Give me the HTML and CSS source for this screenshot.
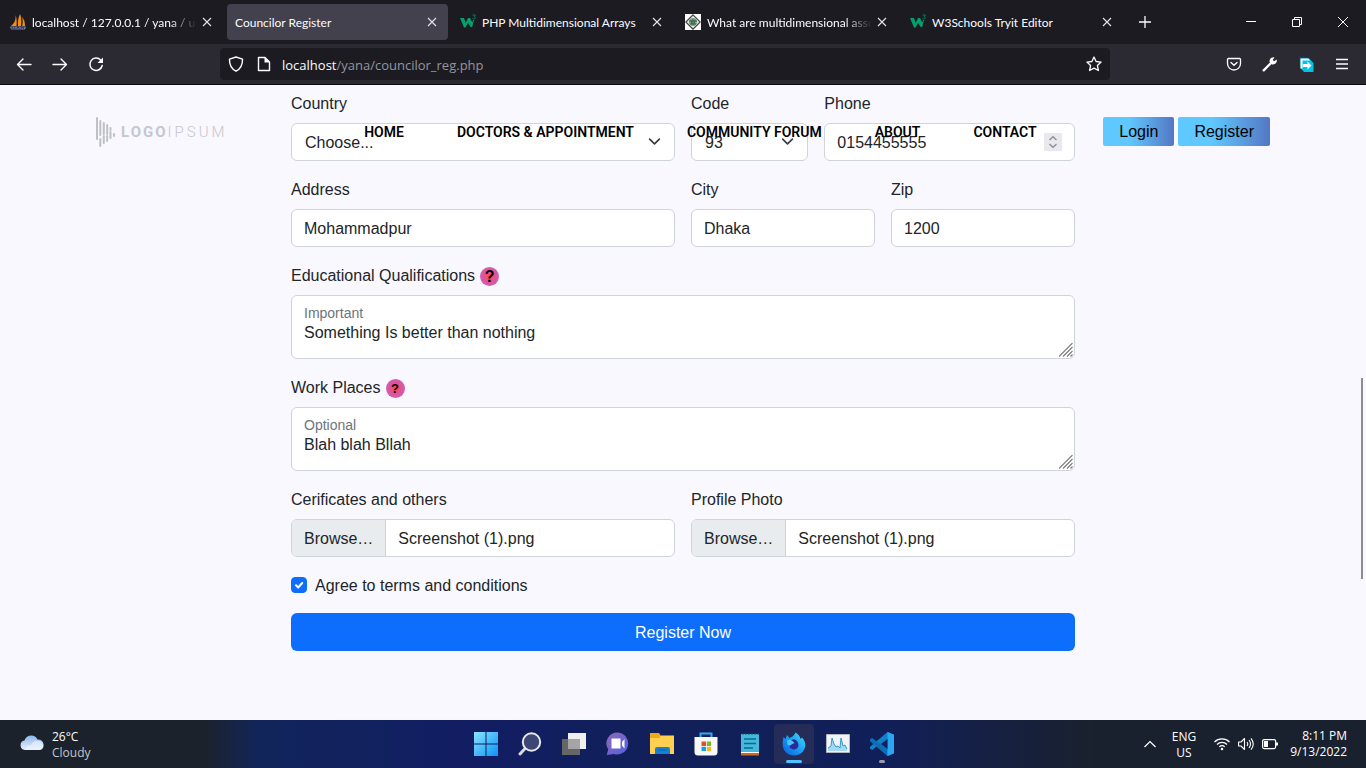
FILE: index.html
```html
<!DOCTYPE html>
<html lang="en">
<head>
<meta charset="utf-8">
<meta name="viewport" content="width=device-width, initial-scale=1">
<title>Councilor Register</title>
<link rel="stylesheet" href="styles.css">
</head>
<body>
<svg class="defs" width="0" height="0" aria-hidden="true">
  <symbol id="x" viewBox="0 0 16 16"><path d="M4 4l8 8M12 4l-8 8" fill="none" stroke="#e6e6ea" stroke-width="1.1"/></symbol>
  <symbol id="w3" viewBox="0 0 16 16"><path d="M0 4h4l1.700 5L8 4h2l2.300 4.500L13 6h1l-1.800 7h-1.500L8 9l-2.500 4.500H4z" fill="#04a06c"/><path d="M12.500 1h3l-1.400 1.600c1.500 0 1.600 2 .2 2.300-.7.200-1.400 0-1.800-.4" fill="none" stroke="#04805a"/></symbol>
  <symbol id="chev" viewBox="0 0 16 16"><path d="M2 5l6 6 6-6" fill="none" stroke="#343a40" stroke-width="2" stroke-linecap="round" stroke-linejoin="round"/></symbol>
  <symbol id="grip" viewBox="0 0 14 14"><path d="M0 13.500L13.500 0M4 13.500L13.500 4M8 13.500L13.500 8M11.500 13.500l2-2" fill="none" stroke="#777" stroke-width="1.100"/></symbol>
</svg>

<header class="browser">
  <div class="tabstrip">
    <div class="tab">
      <svg class="ico" viewBox="0 0 16 16"><path d="M5.500 1C6 5 5 9 1 12h5.500c.5-4 .3-8-1-11zM10 0c-2 4-2.300 8-2 12h3c.6-4 .4-9-1-12zM12 3c1 3 .8 6 .2 9H15c0-4-1-7-3-9z" fill="#f29111"/><path d="M0 12.500h16l-1 3H1z" fill="#777a9c"/><path d="M2 15v-1.500l1.500 1 1.500-1V15m2 0v-1.500h2V15m2 0v-1.500h2.500V15" stroke="#26263c" fill="none" stroke-width=".7"/></svg>
      <span class="tab-title fade">localhost / 127.0.0.1 / yana / users</span>
      <button class="close" aria-label="Close tab"><svg class="ico"><use href="#x"/></svg></button>
    </div>
    <div class="tab active">
      <span class="tab-title">Councilor Register</span>
      <button class="close" aria-label="Close tab"><svg class="ico"><use href="#x"/></svg></button>
    </div>
    <div class="tab">
      <svg class="ico"><use href="#w3"/></svg>
      <span class="tab-title">PHP Multidimensional Arrays</span>
      <button class="close" aria-label="Close tab"><svg class="ico"><use href="#x"/></svg></button>
    </div>
    <div class="tab">
      <svg class="ico" viewBox="0 0 16 16"><path fill="#fff" d="M0 0h16v16H0z"/><path d="M8 .8L15.200 8 8 15.200.8 8z" fill="#e4e9e5" stroke="#444" stroke-width="1.200"/><circle cx="8" cy="8" r="4" fill="#7aa588"/><path d="M4 7h8M5 10h6M8 5v6M6 6l1 4M10 6l-1 4" stroke="#325c43" stroke-width=".8"/></svg>
      <span class="tab-title fade">What are multidimensional associative arrays</span>
      <button class="close" aria-label="Close tab"><svg class="ico"><use href="#x"/></svg></button>
    </div>
    <div class="tab">
      <svg class="ico"><use href="#w3"/></svg>
      <span class="tab-title">W3Schools Tryit Editor</span>
      <button class="close" aria-label="Close tab"><svg class="ico"><use href="#x"/></svg></button>
    </div>
    <button class="tool" aria-label="New tab"><svg class="ico" viewBox="0 0 16 16"><path d="M8 2v12M2 8h12" stroke="#fbfbfe" stroke-width="1.300"/></svg></button>
    <div class="window-controls">
      <button aria-label="Minimize"><svg class="ico" viewBox="0 0 16 16"><path d="M3 7.500h10" stroke="#fff"/></svg></button>
      <button aria-label="Restore"><svg class="ico" viewBox="0 0 16 16"><path d="M3.500 5.500h7v7h-7zM5.500 5.500v-2h7v7h-2" fill="none" stroke="#fff"/></svg></button>
      <button aria-label="Close"><svg class="ico" viewBox="0 0 16 16"><path d="M3 3l10 10M13 3L3 13" stroke="#fff"/></svg></button>
    </div>
  </div>
  <div class="toolbar">
    <button class="tool" aria-label="Back"><svg class="ico" viewBox="0 0 16 16"><path d="M15 8.500H1.500M7 3L1.500 8.500 7 14" fill="none" stroke="#fbfbfe" stroke-width="1.400" stroke-linecap="round" stroke-linejoin="round"/></svg></button>
    <button class="tool" aria-label="Forward"><svg class="ico" viewBox="0 0 16 16"><path d="M1 8.500h13.500M9 3l5.500 5.500L9 14" fill="none" stroke="#fbfbfe" stroke-width="1.400" stroke-linecap="round" stroke-linejoin="round"/></svg></button>
    <button class="tool" aria-label="Reload"><svg class="ico" viewBox="0 0 16 16"><path d="M12.800 4.200A6.200 6.200 0 1 0 14.200 9.500" fill="none" stroke="#fbfbfe" stroke-width="1.500" stroke-linecap="round"/><path d="M15 1.500v5.500H9.500z" fill="#fbfbfe"/></svg></button>
    <div class="urlbar">
      <svg class="ico" viewBox="0 0 16 16"><path d="M8 1L14.500 3.200C14.700 8.500 13 12.500 8 15.200 3 12.500 1.300 8.500 1.500 3.200z" fill="none" stroke="#fbfbfe" stroke-width="1.400" stroke-linejoin="round"/></svg>
      <svg class="ico" viewBox="0 0 16 16"><path d="M3.500 1.500H9L13.500 6v8.500h-11v-13z" fill="none" stroke="#fbfbfe" stroke-width="1.400" stroke-linejoin="round"/><path d="M8.500 1v5.500H14z" fill="#fbfbfe"/></svg>
      <a class="url" href="#"><span class="host">localhost</span>/yana/councilor_reg.php</a>
      <svg class="ico" viewBox="0 0 16 16"><path d="M8 1l2.100 4.500 5 .6-3.700 3.400 1 5L8 12.100 3.600 14.500l1-5L.9 6.100l5-.6z" fill="none" stroke="#fbfbfe" stroke-width="1.300" stroke-linejoin="round"/></svg>
    </div>
    <button class="tool" aria-label="Save to Pocket"><svg class="ico" viewBox="0 0 16 16"><path d="M2.500 2.500h11q1 0 1 1v4a6.500 6.500 0 0 1-13 0v-4q0-1 1-1z" fill="none" stroke="#fbfbfe" stroke-width="1.300"/><path d="M5 6.500l3 2.800 3-2.800" fill="none" stroke="#fbfbfe" stroke-width="1.400" stroke-linecap="round"/></svg></button>
    <button class="tool" aria-label="Developer tools"><svg class="ico" viewBox="0 0 16 16"><path d="M1.700 14.300L9 7" stroke="#fbfbfe" stroke-width="2.400" stroke-linecap="round"/><path d="M12.500 1.300L10.800 4l1.200 1.200 2.800-1.600c.6 3-1.600 5.400-4.700 4.800L7.600 6C7.200 3 9.500.7 12.500 1.300z" fill="#fbfbfe"/></svg></button>
    <button class="tool" aria-label="Extension"><svg class="ico" viewBox="0 0 16 16"><path d="M1 .5h8v7H1z" fill="#0b3d6e"/><path d="M2.500 2.500H11L15.500 7v9H6l-3.500-4z" fill="#00c4e6"/><path d="M2.500 2.500h8L12 4.500H4.500v8h-2z" fill="#fff"/><path d="M5 8h4.500V5.500l4 4-4 4V11H5z" fill="#fff"/></svg></button>
    <button class="tool" aria-label="Menu"><svg class="ico" viewBox="0 0 16 16"><path d="M2 3.500h12M2 8h12M2 12.500h12" stroke="#fbfbfe" stroke-width="1.300"/></svg></button>
  </div>
</header>

<div class="page">
  <header class="site-header">
    <a class="brand" href="#" aria-label="Logoipsum">
      <svg width="20" height="30" viewBox="0 0 20 30"><path d="M1 1v21M4.300 4v14M4.300 22v7M7.800 6v11M7.800 19v7M11.200 8v9M11.200 19v5M14.500 11v2M14.500 15v6M18 17v2" fill="none" stroke="#bfc0c6" stroke-width="2" stroke-linecap="round"/></svg>
      <span class="brand-text"><b>LOGO</b>IPSUM</span>
    </a>
    <nav class="site-nav">
      <a href="#">HOME</a>
      <a href="#">DOCTORS &amp; APPOINTMENT</a>
      <a href="#">COMMUNITY FORUM</a>
      <a href="#">ABOUT</a>
      <a href="#">CONTACT</a>
    </nav>
    <div class="auth">
      <button class="auth-btn">Login</button>
      <button class="auth-btn">Register</button>
    </div>
  </header>

  <form class="form">
    <div class="field half">
      <label for="country">Country</label>
      <div class="wrap"><select id="country" class="control"><option>Choose...</option></select><svg class="arrow"><use href="#chev"/></svg></div>
    </div>
    <div class="field sixth">
      <label for="code">Code</label>
      <div class="wrap"><select id="code" class="control"><option>93</option></select><svg class="arrow"><use href="#chev"/></svg></div>
    </div>
    <div class="field third">
      <label for="phone">Phone</label>
      <div class="wrap"><input id="phone" class="control" type="number" value="0154455555"><svg class="spinner" viewBox="0 0 18 18"><path d="M0 0h18v18H0z" fill="#e9e9ed"/><path d="M5.500 7L9 3.800 12.500 7M5.500 11L9 14.200 12.500 11" fill="none" stroke="#8f8f9d" stroke-width="1.500"/></svg></div>
    </div>
    <div class="field half">
      <label for="address">Address</label>
      <input id="address" class="control" type="text" value="Mohammadpur">
    </div>
    <div class="field quarter">
      <label for="city">City</label>
      <input id="city" class="control" type="text" value="Dhaka">
    </div>
    <div class="field quarter">
      <label for="zip">Zip</label>
      <input id="zip" class="control" type="text" value="1200">
    </div>
    <div class="field full">
      <div class="label-row"><label for="education">Educational Qualifications</label><button type="button" class="help">?</button></div>
      <div class="wrap"><textarea id="education" class="control area">Something Is better than nothing</textarea><label class="floating" for="education">Important</label><svg class="grip"><use href="#grip"/></svg></div>
    </div>
    <div class="field full">
      <div class="label-row"><label for="work">Work Places</label><button type="button" class="help small">?</button></div>
      <div class="wrap"><textarea id="work" class="control area">Blah blah Bllah</textarea><label class="floating" for="work">Optional</label><svg class="grip"><use href="#grip"/></svg></div>
    </div>
    <div class="field half">
      <label for="certificates">Cerificates and others</label>
      <div class="control file"><span class="browse">Browse…</span><span class="filename">Screenshot (1).png</span><input id="certificates" type="file"></div>
    </div>
    <div class="field half">
      <label for="photo">Profile Photo</label>
      <div class="control file"><span class="browse">Browse…</span><span class="filename">Screenshot (1).png</span><input id="photo" type="file"></div>
    </div>
    <div class="check full">
      <span class="box"><input id="agree" type="checkbox" checked><svg class="tick" viewBox="0 0 16 16"><path d="M5 8.300l2.200 2.200L11.200 6" fill="none" stroke="#fff" stroke-width="2" stroke-linecap="round" stroke-linejoin="round"/></svg></span>
      <label for="agree">Agree to terms and conditions</label>
    </div>
    <button type="button" class="submit full">Register Now</button>
  </form>
  <div class="scrollbar"></div>
</div>

<footer class="taskbar">
  <div class="weather">
    <svg width="24" height="24" viewBox="0 0 24 24"><defs><linearGradient id="cl" x2="0" y2="1"><stop stop-color="#8fb7ee"/><stop offset="1" stop-color="#e8f0fb"/></linearGradient></defs><path d="M5 18a4.800 4.800 0 0 1-.5-9.500A7 7 0 0 1 17.500 7.500 5.300 5.300 0 0 1 19 18z" fill="url(#cl)"/><path d="M6 18c-1-3 2-6 5-4 1-6 9-7 11-2 3 2 1 6-2.500 6z" fill="#eef4fc" opacity=".65"/></svg>
    <div class="lines"><div>26°C</div><div class="dim">Cloudy</div></div>
  </div>
  <div class="apps">
    <button class="app" aria-label="Start"><svg viewBox="0 0 24 24"><defs><linearGradient id="wn" x2="1" y2="1"><stop stop-color="#8be3ff"/><stop offset="1" stop-color="#0894f5"/></linearGradient></defs><path d="M0 0h11.500v11.500H0zM12.500 0H24v11.500H12.500zM0 12.500h11.500V24H0zM12.500 12.500H24V24H12.500z" fill="url(#wn)"/></svg></button>
    <button class="app" aria-label="Search"><svg viewBox="0 0 24 24"><path d="M8 15.500L2 22" stroke="#d9d9de" stroke-width="3" stroke-linecap="round"/><circle cx="13.500" cy="10" r="8.700" fill="#3c4775" stroke="#e8e8ec" stroke-width="2"/></svg></button>
    <button class="app" aria-label="Task view"><svg viewBox="0 0 24 24"><path d="M6 1h18v16H6z" fill="#f0f0f0"/><path d="M0 7h18v16H0z" fill="#666"/><path d="M6 7h12v10H6z" fill="#a5a5a5"/></svg></button>
    <button class="app" aria-label="Chat"><svg viewBox="0 0 24 24"><defs><linearGradient id="ch" x2="1" y2="1"><stop stop-color="#8f68b8"/><stop offset="1" stop-color="#5360e0"/></linearGradient></defs><path d="M12 .5a11 11 0 1 1-4 21.500L.8 23l1.400-5.500A11 11 0 0 1 12 .5z" fill="url(#ch)"/><path d="M5.500 6.500h9v10h-9zM16 10l2.500-3v9.500L16 13.500z" fill="#fff"/></svg></button>
    <button class="app" aria-label="File Explorer"><svg viewBox="0 0 24 24"><path d="M0 1h9l2 3h13v18H0z" fill="#f0a910"/><path d="M0 6h9l2-2.500h13V22H0z" fill="#ffd04f"/><path d="M5 22v-5q0-2 2-2h11q2 0 2 2v5z" fill="#1481d2"/><path d="M8.500 18h8" stroke="#0a5ea8"/></svg></button>
    <button class="app" aria-label="Store"><svg viewBox="0 0 24 24"><path d="M6.500 6V1.500h11V6" fill="none" stroke="#2dacef" stroke-width="2"/><path d="M.5 5h23v15q0 3.500-3.500 3.500H4Q.5 23.500.5 20z" fill="#f8f8fa"/><path d="M7.500 9.500H12V14H7.500z" fill="#e45126"/><path d="M12.800 9.500H17V14h-4.200z" fill="#7db72b"/><path d="M7.500 14.800H12V19H7.500z" fill="#18a1e0"/><path d="M12.800 14.800H17V19h-4.200z" fill="#f9b718"/></svg></button>
    <button class="app" aria-label="Notepad"><svg viewBox="0 0 24 24"><path d="M3 2h18v19H3z" fill="#45b8dc"/><path d="M3 21h18v2.500H3z" fill="#c76c22"/><path d="M3 20h18v1H3z" fill="#fff"/><path d="M5 1v2M8 1v2M11 1v2M14 1v2M17 1v2M20 1v2" stroke="#0b5777"/><path d="M6 7h12M6 11.500h12M6 16h9" stroke="#076b93" stroke-width="1.500"/></svg></button>
    <button class="app current" aria-label="Firefox"><svg viewBox="0 0 24 24"><defs><linearGradient id="ff" x1="1" x2="0" y2="1"><stop stop-color="#42e4fa"/><stop offset=".5" stop-color="#1a9cf4"/><stop offset="1" stop-color="#0a5be0"/></linearGradient></defs><path d="M1.500 5L3.500 7 5 3l2.500 3 3-1.500C12 3 13 2 13.500.5 16 2 18 4 18.500 7L20 5.500C22 8 23.500 10 23.300 13.500 22.500 20 18 23.500 12 23.500S1 19 .7 13C.5 10 1 8 1.500 5z" fill="url(#ff)"/><path d="M7 12c0-4 5-6 8-3 3 4 1 9-4 8.500-2.500-.5-4-2.500-4-5.500z" fill="#272c98"/><path d="M5 8.500c2-1 4-1 6 1l1.500 1.500-3 1.500c-2 2-3 1-4 0z" fill="#44c7fa"/></svg></button>
    <button class="app" aria-label="Resource monitor"><svg viewBox="0 0 24 24"><path d="M.5 2.500h23v18H.5z" fill="#f1f4f7" stroke="#b2b7bd"/><path d="M2 19v-3l3-2 1-8 2 6 2 3 2-1 2 2 1-10 2 8 2-1 2 4v2z" fill="#a3d7f4"/><path d="M2 16l3-2 1-8 2 6 2 3 2-1 2 2 1-10 2 8 2-1 2 4" fill="none" stroke="#3698ce"/></svg></button>
    <button class="app running" aria-label="Visual Studio Code"><svg viewBox="0 0 24 24"><path d="M17.500 0L24 2.700v18.600L17.500 24 7 14.200 2.200 18 0 16.700v-2L17.500 0z" fill="#147fc9"/><path d="M2.200 6L0 7.200v2L17.500 24v-6.500z" fill="#0c6eb5"/><path d="M17.500 0L24 2.700v18.600L17.500 24z" fill="#2aa7f2"/><path d="M17.500 7v10L11 12z" fill="#11205a"/></svg></button>
  </div>
  <div class="tray">
    <svg width="14" height="10" viewBox="0 0 14 10"><path d="M1.500 8L7 2.500 12.500 8" fill="none" stroke="#fff" stroke-width="1.200"/></svg>
    <div class="lang lines"><div>ENG</div><div>US</div></div>
    <div class="status">
      <svg class="ico" viewBox="0 0 16 16"><path d="M.5 6a10.500 10.500 0 0 1 15 0M3 8.500a7 7 0 0 1 10 0M5.300 10.800a3.800 3.800 0 0 1 5.400 0" fill="none" stroke="#fff" stroke-width="1.200"/><circle cx="8" cy="13" r="1.300" fill="#fff"/></svg>
      <svg class="ico" viewBox="0 0 16 16"><path d="M.6 6H3l3.500-3.500v11L3 10H.6zM9 6q1.500 2 0 4M11 4q3 4 0 8M13 2.300q4.500 5.700 0 11.400" fill="none" stroke="#fff" stroke-width="1.100" stroke-linejoin="round"/></svg>
      <svg class="ico" viewBox="0 0 16 16"><rect x=".6" y="3.600" width="13" height="9" rx="1.500" fill="none" stroke="#fff" stroke-width="1.200"/><path d="M2 5h4v6H2zM14 6.500h2v3h-2z" fill="#fff"/></svg>
    </div>
    <div class="clock"><div>8:11 PM</div><div>9/13/2022</div></div>
  </div>
</footer>
</body>
</html>
```
FILE: styles.css
```css
* { box-sizing: border-box; }

body {
  margin: 0;
  height: 100vh;
  display: flex;
  flex-direction: column;
  overflow: hidden;
  font-family: "Liberation Sans", Arial, sans-serif;
  font-size: 16px;
  line-height: 24px;
  color: #212529;
}

button, input, select, textarea { font: inherit; color: inherit; margin: 0; }
button { border: 0; padding: 0; background: none; }
a { color: inherit; text-decoration: none; }
svg { display: block; flex: none; }
.defs { position: absolute; }
.ico { width: 16px; height: 16px; }

/* Browser chrome */
.browser {
  flex: none;
  font-family: "Open Sans", "Noto Sans", sans-serif;
  color: #fbfbfe;
  background: #2b2a33;
  border-bottom: 1px solid #0c0c0d;
}
.tabstrip {
  display: flex;
  align-items: center;
  gap: 4px;
  height: 44px;
  padding-left: 2px;
  background: #1c1b22;
}
.tab {
  flex: 0 1 221px;
  min-width: 0;
  height: 36px;
  padding: 0 8px;
  display: flex;
  align-items: center;
  gap: 6px;
  border-radius: 4px;
}
.tab.active { background: #42414d; }
.tab-title {
  flex: 1;
  min-width: 0;
  overflow: hidden;
  white-space: nowrap;
  padding-top: 2px;
  font-family: Lato, "Open Sans", sans-serif;
  font-size: 12px;
  line-height: 20px;
}
.tab-title.fade {
  margin-right: -4px;
  -webkit-mask-image: linear-gradient(to left, transparent, #000 28px);
  mask-image: linear-gradient(to left, transparent, #000 28px);
}
.window-controls { display: flex; margin-left: auto; }
.window-controls button { width: 46px; height: 44px; display: grid; place-items: center; }
.toolbar {
  display: flex;
  align-items: center;
  height: 40px;
  padding: 0 6px;
}
.tool { flex: none; width: 36px; height: 32px; display: grid; place-items: center; }
.urlbar {
  flex: 1;
  height: 32px;
  margin: 0 106px;
  padding: 0 8px;
  display: flex;
  align-items: center;
  gap: 12px;
  border-radius: 4px;
  background: #1c1b22;
}
.url { flex: 1; padding-top: 2px; margin-left: -2px; font-size: 13px; color: #95959e; }
.host { color: #fbfbfe; }

/* Site */
.page {
  flex: 1;
  min-height: 0;
  position: relative;
  overflow: hidden;
  padding-top: 6px;
  background: #f9f8fe;
}
.site-header {
  position: absolute;
  inset: 0 0 auto;
  z-index: 2;
  padding: 32px 96px;
  display: flex;
  align-items: flex-start;
  justify-content: space-between;
}
.brand { display: flex; align-items: center; gap: 5px; color: #c6c7cc; }
.brand-text { font-family: Roboto, sans-serif; font-size: 15px; font-weight: 300; letter-spacing: 3px; }
.brand-text b { font-weight: 700; letter-spacing: 2px; }
.site-nav {
  display: flex;
  gap: 53px;
  padding-left: 70px;
  font-family: Roboto, sans-serif;
  font-size: 14px;
  font-weight: 600;
  line-height: 30px;
  color: #000;
}
.auth { display: flex; gap: 4px; }
.auth-btn {
  height: 29px;
  padding: 1px 16px 0;
  border-radius: 2px;
  color: #000;
  background: linear-gradient(to right, #5fc9ff 36%, #5477c4);
}
.form {
  width: calc(100% - 32px);
  max-width: 784px;
  margin: 0 auto;
  display: grid;
  grid-template-columns: repeat(12, minmax(0, 1fr));
  gap: 16px;
}
.full { grid-column: span 12; }
.half { grid-column: span 6; }
.third { grid-column: span 4; }
.quarter { grid-column: span 3; }
.sixth { grid-column: span 2; }
.field { display: flex; flex-direction: column; gap: 6px; line-height: 26px; }
.label-row { display: flex; align-items: center; gap: 5px; }
.wrap { position: relative; }
.control {
  display: block;
  width: 100%;
  height: 38px;
  padding: 7px 12px 5px;
  border: 1px solid #ced4da;
  border-radius: 6px;
  line-height: 24px;
  background: #fff;
  appearance: none;
}
select.control { padding-left: 13px; }
.control::-webkit-inner-spin-button { display: none; }
.arrow { position: absolute; right: 14px; top: 12px; width: 13px; height: 13px; pointer-events: none; }
.spinner { position: absolute; right: 13px; top: 10px; width: 18px; height: 18px; }
.control.area { height: 64px; padding-top: 25px; resize: none; overflow: hidden; }
.floating { position: absolute; left: 13px; top: 6px; font-size: 14px; line-height: 24px; color: #6c757d; }
.grip { position: absolute; right: 2px; bottom: 2px; width: 14px; height: 14px; }
.help {
  width: 19px;
  height: 19px;
  border-radius: 50%;
  font-weight: 700;
  line-height: 19px;
  color: #000;
  background: radial-gradient(circle 11px, #ff4550, #c561d0);
}
.help.small { font-size: 13px; }
.file { position: relative; display: flex; padding: 0; overflow: hidden; }
.file input { position: absolute; inset: 0; width: 100%; opacity: 0; }
.browse { padding: 7px 12px 5px; border-right: 1px solid #ced4da; background: #e9ecef; }
.filename { padding: 7px 12px 5px; }
.check { display: flex; align-items: center; gap: 8px; height: 24px; }
.check label { padding-top: 2px; }
.box { position: relative; width: 16px; height: 16px; }
.box input { display: block; width: 16px; height: 16px; appearance: none; border-radius: 4px; background: #fff; border: 1px solid #ced4da; }
.box input:checked { background: #0d6efd; border-color: #0d6efd; }
.tick { position: absolute; inset: 0; pointer-events: none; }
.submit { height: 38px; padding-top: 2px; border-radius: 6px; color: #fff; background: #0d6efd; }
.scrollbar { position: absolute; right: 3px; top: 293px; width: 2px; height: 201px; background: #8c8c90; }

/* Taskbar */
.taskbar {
  flex: none;
  height: 48px;
  display: grid;
  grid-template-columns: 1fr auto 1fr;
  align-items: center;
  font-family: "Open Sans", "Noto Sans", sans-serif;
  font-size: 12px;
  line-height: 16px;
  color: #fff;
  background: linear-gradient(to right, #1b222c 15%, #11255a 19%, #121d63 34%, #11205a 48%, #111f58 65%, #1a212e 80%);
}
.weather { display: flex; align-items: center; gap: 8px; padding-left: 20px; }
.lines { padding-top: 2px; }
.dim { color: #c3c6ca; }
.apps { display: flex; gap: 4px; padding-left: 2px; }
.app { position: relative; width: 40px; height: 40px; display: grid; place-items: center; border-radius: 4px; }
.app svg { width: 24px; height: 24px; }
.app.current { background: #242c57; }
.app.current::after, .app.running::after {
  content: "";
  position: absolute;
  bottom: 1px;
  left: 12px;
  width: 16px;
  height: 3px;
  border-radius: 2px;
  background: #4cc2ff;
}
.app.running::after { left: 17px; width: 6px; background: #9a9cae; }
.tray { display: flex; align-items: center; justify-content: flex-end; padding-right: 19px; }
.lang { width: 54px; text-align: center; }
.status { display: flex; gap: 8px; padding-left: 3px; }
.clock { width: 69px; text-align: right; }
```
